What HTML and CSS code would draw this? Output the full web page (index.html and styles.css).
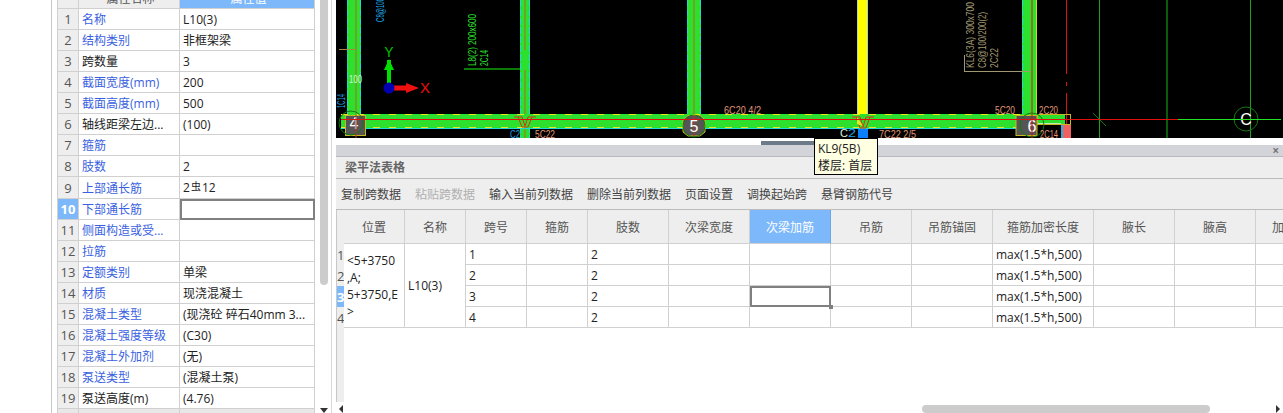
FILE: index.html
```html
<!DOCTYPE html>
<html lang="en">
<head>
  <meta charset="UTF-8" />
  <title>梁平法表格</title>
  <link rel="stylesheet" href="styles.css">
</head>
<body>
  <aside class="props">
    <div class="props-table-wrap">
      <table class="props-table">
        <thead>
          <tr><th class="num"></th><th class="name-col">属性名称</th><th class="active">属性值</th></tr>
        </thead>
        <tbody>
          <tr><td class="num">1</td><td class="link">名称</td><td>L10(3)</td></tr>
          <tr><td class="num">2</td><td class="link">结构类别</td><td>非框架梁</td></tr>
          <tr><td class="num">3</td><td>跨数量</td><td>3</td></tr>
          <tr><td class="num">4</td><td class="link">截面宽度(mm)</td><td>200</td></tr>
          <tr><td class="num">5</td><td class="link">截面高度(mm)</td><td>500</td></tr>
          <tr><td class="num">6</td><td>轴线距梁左边...</td><td>(100)</td></tr>
          <tr><td class="num">7</td><td class="link">箍筋</td><td></td></tr>
          <tr><td class="num">8</td><td class="link">肢数</td><td>2</td></tr>
          <tr><td class="num">9</td><td class="link">上部通长筋</td><td>2<span class="rebar">虫</span>12</td></tr>
          <tr><td class="num current">10</td><td class="link">下部通长筋</td><td class="selected"></td></tr>
          <tr><td class="num">11</td><td class="link">侧面构造或受...</td><td></td></tr>
          <tr><td class="num">12</td><td class="link">拉筋</td><td></td></tr>
          <tr><td class="num">13</td><td class="link">定额类别</td><td>单梁</td></tr>
          <tr><td class="num">14</td><td class="link">材质</td><td>现浇混凝土</td></tr>
          <tr><td class="num">15</td><td class="link">混凝土类型</td><td>(现浇砼 碎石40mm 3...</td></tr>
          <tr><td class="num">16</td><td class="link">混凝土强度等级</td><td>(C30)</td></tr>
          <tr><td class="num">17</td><td class="link">混凝土外加剂</td><td>(无)</td></tr>
          <tr><td class="num">18</td><td class="link">泵送类型</td><td>(混凝土泵)</td></tr>
          <tr><td class="num">19</td><td>泵送高度(m)</td><td>(4.76)</td></tr>
          <tr class="more"><td></td><td></td><td></td></tr>
        </tbody>
      </table>
    </div>
    <div class="vscroll">
      <div class="vscroll-thumb"></div>
      <div class="vscroll-down"></div>
    </div>
  </aside>

  <main class="work">
    <svg class="cad" viewBox="336 0 947 138" width="947" height="138">
      <rect x="336" y="0" width="947" height="138" fill="#000" />

      <!-- grid lines -->
      <path d="M1099.5 0V138M1250.5 0V138" stroke="#1fa01f" />
      <path d="M1167 0V138" stroke="#0a5c0a" stroke-width="2" />
      <path d="M1093 113L1106 126" stroke="#0f7a0f" />
      <path d="M1066.5 0V74M1066.5 82V86M1066.5 93V125" stroke="#e01010" />

      <!-- vertical beams -->
      <rect x="347" y="0" width="14" height="115" fill="#2ee02e" />
      <path d="M347.5 0V115M360.5 0V115" stroke="#22d8d8" stroke-dasharray="7 2" />
      <path d="M356 0V115" stroke="#b06a20" />
      <rect x="520" y="0" width="10" height="138" fill="#2ee02e" />
      <path d="M520.5 0V138M529.5 0V138" stroke="#22d8d8" stroke-dasharray="7 2" />
      <path d="M525 0V50M525 70V138" stroke="#b06a20" />
      <rect x="687" y="0" width="14" height="115" fill="#2ee02e" />
      <path d="M687.5 0V115M700.5 0V115" stroke="#22d8d8" stroke-dasharray="7 2" />
      <path d="M694 0V115" stroke="#b06a20" />
      <rect x="857" y="0" width="11" height="116" fill="#ffff00" />
      <path d="M857.5 0V116M867.5 0V116" stroke="#b8d8b8" />
      <rect x="858" y="129" width="10" height="9" fill="#0a80ff" />
      <rect x="1022" y="0" width="15" height="115" fill="#2ee02e" />
      <path d="M1022.5 0V115" stroke="#22d8d8" stroke-dasharray="7 2" />
      <path d="M1036.5 0V115" stroke="#d8d820" />

      <!-- horizontal beam -->
      <rect x="341" y="114" width="724" height="15" fill="#2ee02e" />
      <path d="M341 114.5H1020" stroke="#e8e820" stroke-dasharray="7 9" />
      <path d="M341 128.5H1016" stroke="#22d8d8" />
      <path d="M341 127.5H1016" stroke="#e8e820" stroke-dasharray="7 9" />
      <rect x="1037" y="124" width="24" height="14" fill="#000" />
      <rect x="1037" y="123" width="24" height="2" fill="#b8f0b8" />
      <rect x="1061" y="124" width="2" height="14" fill="#22b0e0" />
      <rect x="1063" y="124" width="8" height="14" fill="#f06060" />
      <rect x="1037.5" y="114.5" width="33" height="10" fill="none" stroke="#c8b820" />

      <!-- beam ends -->
      <path d="M514 117H522L525 126L528 117H536M518 117L522 127H528L532 117" fill="none" stroke="#e03010" />
      <path d="M852 117H860L863 127L866 117H874M856 117L860 128H866L870 117" fill="none" stroke="#e03010" />
      <path d="M857 117L863 126L857 124Z" fill="#e8e820" />

      <!-- axis bubbles -->
      <rect x="345.5" y="115.5" width="20" height="20" fill="#555" stroke="#c8b820" />
      <circle cx="351" cy="123" r="12" fill="none" stroke="#0f7a0f" />
      <text class="bubble" x="354" y="129">4</text>
      <path d="M683 120L688 115.500H700L705 120V132L700 136H688L683 132Z" fill="#555" stroke="#c8b820" />
      <circle cx="694" cy="126" r="11" fill="none" stroke="#0f7a0f" />
      <path d="M694 115V136M356 115V138" stroke="#c03020" />
      <text class="bubble" x="694" y="132">5</text>
      <rect x="1016" y="115.500" width="21" height="20" fill="#555" stroke="#c8b820" />
      <circle cx="1032" cy="125" r="12" fill="none" stroke="#0f7a0f" />
      <text class="bubble" x="1032" y="132">6</text>
      <circle cx="1246" cy="119" r="12" fill="none" stroke="#0f7a0f" />
      <text class="bubble" x="1246" y="125">C</text>

      <!-- centre lines -->
      <path d="M341 119.500H1178" stroke="#e01010" />
      <path d="M1178 119.500H1281" stroke="#22e022" />
      <path d="M1032 0V138" stroke="#e01010" />

      <!-- leaders -->
      <path d="M339 49.500H356" stroke="#a08a40" />
      <path d="M464 69H520" stroke="#0a7a0a" stroke-width="2" />
      <path d="M964 71.500H1030M964.500 55V71" stroke="#a09870" />

      <!-- origin marker -->
      <path d="M387 60H391V84H387Z" fill="#00e000" />
      <path d="M389 59L394 70H384Z" fill="#00e000" />
      <path d="M394 85.500H406V83L419 88L406 93V90.500H394Z" fill="#f01010" />
      <circle cx="389" cy="88" r="5.500" fill="#0000b0" />
      <text class="axis-y" x="389" y="57">Y</text>
      <text class="axis-x" x="425" y="93">X</text>

      <!-- annotations -->
      <text class="note green" transform="translate(476 66) rotate(-90)" textLength="52" lengthAdjust="spacingAndGlyphs">L8(2) 200x600</text>
      <text class="note green" transform="translate(488 66) rotate(-90)" textLength="16" lengthAdjust="spacingAndGlyphs">2C14</text>
      <text class="note cyan" transform="translate(384 22) rotate(-90)" textLength="36" lengthAdjust="spacingAndGlyphs">C8@100/200</text>
      <text class="note cyan" transform="translate(345 108) rotate(-90)" textLength="14" lengthAdjust="spacingAndGlyphs">1C14</text>
      <text class="note pale" x="349" y="83" textLength="13" lengthAdjust="spacingAndGlyphs">100</text>
      <text class="note salmon" x="535" y="138" textLength="20" lengthAdjust="spacingAndGlyphs">5C22</text>
      <text class="note cyan" x="510" y="138" textLength="10" lengthAdjust="spacingAndGlyphs">C2</text>
      <text class="note salmon" x="724" y="114" textLength="37" lengthAdjust="spacingAndGlyphs">6C20 4/2</text>
      <text class="note pale" x="840" y="137" textLength="8" lengthAdjust="spacingAndGlyphs">C</text>
      <text class="note cyan" x="848" y="137" textLength="8" lengthAdjust="spacingAndGlyphs">2</text>
      <text class="note salmon" x="879" y="138" textLength="37" lengthAdjust="spacingAndGlyphs">7C22 2/5</text>
      <text class="note khaki" transform="translate(974 68) rotate(-90)" textLength="66" lengthAdjust="spacingAndGlyphs">KL6(3A) 300x700</text>
      <text class="note khaki" transform="translate(986 68) rotate(-90)" textLength="56" lengthAdjust="spacingAndGlyphs">C8@100/200(2)</text>
      <text class="note khaki" transform="translate(998 68) rotate(-90)" textLength="20" lengthAdjust="spacingAndGlyphs">2C22</text>
      <text class="note salmon" x="995" y="114" textLength="20" lengthAdjust="spacingAndGlyphs">5C20</text>
      <text class="note salmon" x="1039" y="114" textLength="19" lengthAdjust="spacingAndGlyphs">2C20</text>
      <text class="note salmon" x="1040" y="138" textLength="18" lengthAdjust="spacingAndGlyphs">2C14</text>
    </svg>

    <div class="splitter"><div class="splitter-grip"></div></div>

    <div class="tooltip">KL9(5B)<br>楼层: 首层</div>

    <section class="beam-panel">
      <div class="dock-bar"><span class="dock-close">×</span></div>
      <div class="panel-title">梁平法表格</div>
      <div class="toolbar">
        <span>复制跨数据</span>
        <span class="disabled">粘贴跨数据</span>
        <span>输入当前列数据</span>
        <span>删除当前列数据</span>
        <span>页面设置</span>
        <span>调换起始跨</span>
        <span>悬臂钢筋代号</span>
      </div>
      <div class="grid-wrap">
        <table class="beam-table">
          <colgroup>
            <col class="w-head"><col class="w-61"><col class="w-61"><col class="w-61"><col class="w-61">
            <col class="w-81"><col class="w-81"><col class="w-81"><col class="w-81"><col class="w-81">
            <col class="w-101"><col class="w-81"><col class="w-81"><col class="w-81">
          </colgroup>
          <thead>
            <tr>
              <th class="row-head"></th><th>位置</th><th>名称</th><th>跨号</th><th>箍筋</th><th>肢数</th><th>次梁宽度</th>
              <th class="active">次梁加筋</th><th>吊筋</th><th>吊筋锚固</th><th>箍筋加密长度</th><th>腋长</th><th>腋高</th><th>加腋钢筋</th>
            </tr>
          </thead>
          <tbody>
            <tr>
              <td class="row-head">1</td>
              <td rowspan="4" class="pos">&lt;5+3750<br>,A;<br>5+3750,E<br>&gt;</td>
              <td rowspan="4">L10(3)</td>
              <td>1</td><td></td><td>2</td><td></td><td></td><td></td><td></td><td>max(1.5*h,500)</td><td></td><td></td><td></td>
            </tr>
            <tr>
              <td class="row-head">2</td>
              <td>2</td><td></td><td>2</td><td></td><td></td><td></td><td></td><td>max(1.5*h,500)</td><td></td><td></td><td></td>
            </tr>
            <tr>
              <td class="row-head current">3</td>
              <td>3</td><td></td><td>2</td><td></td><td class="selected"><i class="fill-handle"></i></td><td></td><td></td><td>max(1.5*h,500)</td><td></td><td></td><td></td>
            </tr>
            <tr>
              <td class="row-head">4</td>
              <td>4</td><td></td><td>2</td><td></td><td></td><td></td><td></td><td>max(1.5*h,500)</td><td></td><td></td><td></td>
            </tr>
          </tbody>
        </table>
      </div>
      <div class="hscroll">
        <div class="hscroll-left"></div>
        <div class="hscroll-thumb"></div>
        <div class="hscroll-right"></div>
      </div>
    </section>
  </main>
</body>
</html>
```

FILE: styles.css
```css
body {
  margin: 0;
  width: 1283px;
  height: 413px;
  overflow: hidden;
  display: flex;
  background: #fff;
  color: #222;
  font-family: "Open Sans", "Noto Sans CJK SC", sans-serif;
  font-size: 12px;
}

/* left property list */
.props {
  width: 279px;
  height: 413px;
  margin-left: 51px;
  padding-left: 5px;
  overflow: hidden;
  display: flex;
  flex-shrink: 0;
  border-left: 1px solid #c8c8c8;
}
.props-table-wrap {
  width: 258px;
  height: 413px;
  overflow: hidden;
  flex-shrink: 0;
}
.props-table {
  width: 258px;
  margin-top: -12px;
  table-layout: fixed;
  border-collapse: separate;
  border-spacing: 0;
  border-left: 1px solid #d0d0d0;
}
.props-table th,
.props-table td {
  height: 19px;
  padding: 1px 0 0 3px;
  border-right: 1px solid #d0d0d0;
  border-bottom: 1px solid #d0d0d0;
  font-weight: normal;
  line-height: 19px;
  white-space: nowrap;
  overflow: hidden;
}
.props-table th:nth-child(1) { width: 20px; }
.props-table th:nth-child(2) { width: 97px; }
.props-table th {
  background: #eee;
  color: #555;
  text-align: center;
}
.props-table .num {
  padding: 1px 0 0;
  background: #eee;
  color: #555;
  font-size: 13px;
  text-align: center;
}
.props-table .active {
  background: #7db8fa;
  color: #fff;
}
.props-table .current {
  background: #7db8fa;
  color: #fff;
  font-weight: 700;
}
.link {
  color: #3a5fe0;
}
.rebar {
  position: relative;
  top: -2px;
  margin: 0 1px;
  font-size: 10px;
}
.props-table .selected {
  padding: 0;
  height: 17px;
  border: 2px solid #808080;
}
.props-table .more td {
  background: #e8e8e8;
}

.vscroll {
  width: 12px;
  margin-left: 4px;
  display: flex;
  flex-direction: column;
  align-items: flex-start;
  border-right: 1px solid #d8d8d8;
}
.vscroll-thumb {
  width: 8px;
  height: 285px;
  margin-left: 1px;
  background: #ccc;
  border-radius: 0 0 4px 4px;
}
.vscroll-down {
  width: 0;
  height: 0;
  margin: auto 0 0 1px;
  border-top: 5px solid #333;
  border-left: 4px solid transparent;
  border-right: 4px solid transparent;
}

/* right side */
.work {
  position: relative;
  width: 947px;
  flex-shrink: 0;
}
.cad {
  display: block;
}
.splitter {
  height: 7px;
  display: flex;
  background: #fff;
}
.splitter-grip {
  width: 53px;
  height: 4px;
  margin: 3px 0 0 425px;
  background: #6c7a89;
}
.tooltip {
  position: absolute;
  left: 478px;
  top: 138px;
  z-index: 10;
  width: 57px;
  height: 33px;
  padding: 1px 2px 1px 3px;
  background: #ffffe1;
  border: 1px solid #000;
  color: #222;
  line-height: 17px;
}

.beam-panel {
  height: 268px;
  display: flex;
  flex-direction: column;
}
.dock-bar {
  height: 11px;
  flex-shrink: 0;
  display: flex;
  justify-content: flex-end;
  align-items: center;
  padding-right: 4px;
  background: #d3d4d9;
  border-bottom: 1px solid #b8b9be;
}
.dock-close {
  color: #777;
  font-size: 12px;
  font-weight: 700;
  line-height: 11px;
}
.panel-title {
  height: 21px;
  flex-shrink: 0;
  padding-left: 9px;
  background: #eee;
  border-bottom: 1px solid #bbb;
  color: #666;
  font-weight: 600;
  line-height: 21px;
}
.toolbar {
  height: 30px;
  flex-shrink: 0;
  display: flex;
  gap: 14px;
  align-items: center;
  padding-left: 5px;
  background: #eee;
  border-bottom: 1px solid #bbb;
  color: #444;
}
.toolbar .disabled {
  color: #b0b0b0;
}
.grid-wrap {
  height: 192px;
  flex-shrink: 0;
  overflow: hidden;
  border-left: 1px solid #c8c8c8;
  background: linear-gradient(#eee, #eee) no-repeat left top / 7px 100%;
}
.beam-table {
  width: 1000px;
  table-layout: fixed;
  border-collapse: separate;
  border-spacing: 0;
}
.w-head { width: 7px; }
.w-61 { width: 61px; }
.w-81 { width: 81px; }
.w-101 { width: 101px; }
.beam-table th,
.beam-table td {
  height: 20px;
  padding: 0 0 0 3px;
  border-right: 1px solid #d0d0d0;
  border-bottom: 1px solid #d0d0d0;
  font-weight: normal;
  white-space: nowrap;
  overflow: hidden;
}
.beam-table th {
  height: 33px;
  padding: 0;
  background: #eee;
  color: #555;
  text-align: center;
}
.beam-table th.active {
  background: #7db8fa;
  border-right-color: #6aa8ee;
  color: #fff;
}
.beam-table .row-head {
  padding: 0;
  background: #eee;
  border: 0;
  color: #555;
  font-size: 13px;
  text-align: center;
}
.beam-table .row-head.current {
  background: #7db8fa;
  color: #fff;
  font-weight: 700;
}
.beam-table .pos {
  padding-left: 3px;
  line-height: 17px;
}
.beam-table .selected {
  position: relative;
  overflow: visible;
  padding: 0;
  height: 17px;
  border: 2px solid #808080;
}
.fill-handle {
  position: absolute;
  right: -4px;
  bottom: -4px;
  width: 4px;
  height: 4px;
  background: #808080;
}
.hscroll {
  height: 8px;
  margin-top: 3px;
  flex-shrink: 0;
  display: flex;
  align-items: center;
}
.hscroll-left {
  width: 0;
  height: 0;
  margin-left: 3px;
  border-right: 4px solid #333;
  border-top: 4px solid transparent;
  border-bottom: 4px solid transparent;
}
.hscroll-thumb {
  width: 288px;
  height: 8px;
  margin-left: 579px;
  background: #ccc;
  border-radius: 4px;
}
.hscroll-right {
  width: 0;
  height: 0;
  margin-left: 66px;
  border-left: 4px solid #333;
  border-top: 4px solid transparent;
  border-bottom: 4px solid transparent;
}

/* drawing text */
.cad text {
  font-family: "Liberation Sans", sans-serif;
}
.cad .bubble {
  fill: #fff;
  font-size: 16px;
  text-anchor: middle;
}
.cad .axis-y {
  fill: #00c000;
  font-size: 14px;
  text-anchor: middle;
}
.cad .axis-x {
  fill: #f01010;
  font-size: 15px;
  text-anchor: middle;
}
.cad .note {
  font-size: 11px;
}
.note.green { fill: #2ee02e; }
.note.cyan { fill: #1ea0e0; }
.note.pale { fill: #d8f8d8; }
.note.salmon { fill: #e09878; }
.note.khaki { fill: #a09870; }
```
